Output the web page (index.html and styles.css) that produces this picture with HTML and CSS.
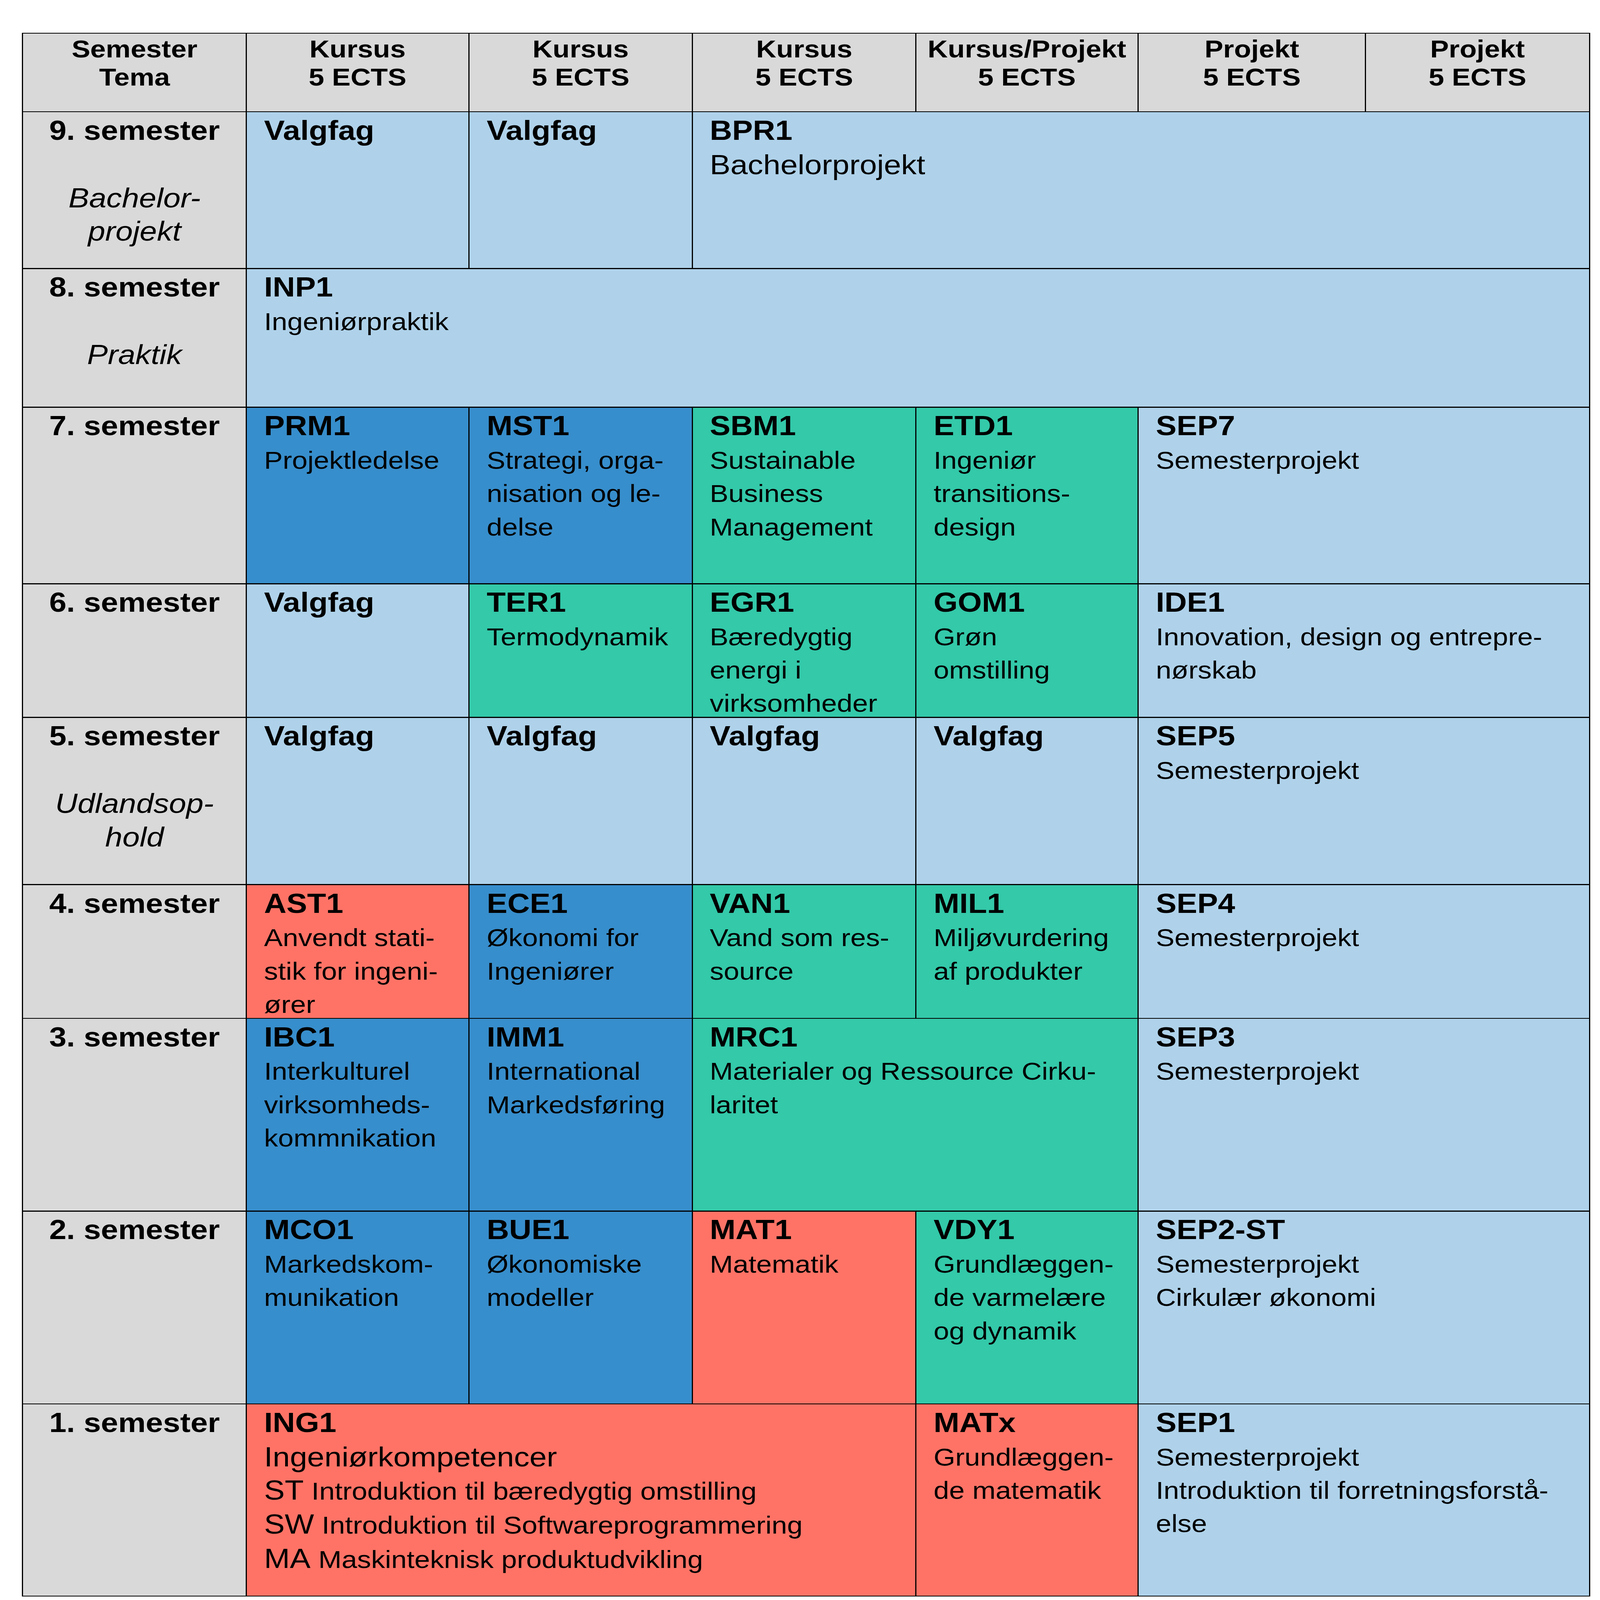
FILE: index.html
```html
<!DOCTYPE html>
<html lang="da">
<head>
<meta charset="utf-8">
<title>Studieplan</title>
<link rel="stylesheet" href="styles.css">
</head>
<body>
<div class="plan">
  <!-- header -->
  <div class="hd"><div class="hd-text">Semester<br>Tema</div></div>
  <div class="hd"><div class="hd-text">Kursus<br>5 ECTS</div></div>
  <div class="hd"><div class="hd-text">Kursus<br>5 ECTS</div></div>
  <div class="hd"><div class="hd-text">Kursus<br>5 ECTS</div></div>
  <div class="hd"><div class="hd-text">Kursus/Projekt<br>5 ECTS</div></div>
  <div class="hd"><div class="hd-text">Projekt<br>5 ECTS</div></div>
  <div class="hd"><div class="hd-text">Projekt<br>5 ECTS</div></div>

  <!-- 9. semester -->
  <div class="sem"><span class="sem-no">9. semester</span><span class="theme">Bachelor-<br>projekt</span></div>
  <div class="cell light"><div class="code">Valgfag</div></div>
  <div class="cell light"><div class="code">Valgfag</div></div>
  <div class="cell light span-4"><div class="code">BPR1</div><div class="name big">Bachelorprojekt</div></div>

  <!-- 8. semester -->
  <div class="sem"><span class="sem-no">8. semester</span><span class="theme">Praktik</span></div>
  <div class="cell light span-6"><div class="code">INP1</div><div class="name">Ingeniørpraktik</div></div>

  <!-- 7. semester -->
  <div class="sem"><span class="sem-no">7. semester</span></div>
  <div class="cell blue"><div class="code">PRM1</div><div class="name">Projektledelse</div></div>
  <div class="cell blue"><div class="code">MST1</div><div class="name">Strategi, orga-<br>nisation og le-<br>delse</div></div>
  <div class="cell green"><div class="code">SBM1</div><div class="name">Sustainable<br>Business<br>Management</div></div>
  <div class="cell green"><div class="code">ETD1</div><div class="name">Ingeniør<br>transitions-<br>design</div></div>
  <div class="cell light span-2"><div class="code">SEP7</div><div class="name">Semesterprojekt</div></div>

  <!-- 6. semester -->
  <div class="sem"><span class="sem-no">6. semester</span></div>
  <div class="cell light"><div class="code">Valgfag</div></div>
  <div class="cell green"><div class="code">TER1</div><div class="name">Termodynamik</div></div>
  <div class="cell green"><div class="code">EGR1</div><div class="name">Bæredygtig<br>energi i<br>virksomheder</div></div>
  <div class="cell green"><div class="code">GOM1</div><div class="name">Grøn<br>omstilling</div></div>
  <div class="cell light span-2"><div class="code">IDE1</div><div class="name">Innovation, design og entrepre-<br>nørskab</div></div>

  <!-- 5. semester -->
  <div class="sem"><span class="sem-no">5. semester</span><span class="theme">Udlandsop-<br>hold</span></div>
  <div class="cell light"><div class="code">Valgfag</div></div>
  <div class="cell light"><div class="code">Valgfag</div></div>
  <div class="cell light"><div class="code">Valgfag</div></div>
  <div class="cell light"><div class="code">Valgfag</div></div>
  <div class="cell light span-2"><div class="code">SEP5</div><div class="name">Semesterprojekt</div></div>

  <!-- 4. semester -->
  <div class="sem"><span class="sem-no">4. semester</span></div>
  <div class="cell red"><div class="code">AST1</div><div class="name">Anvendt stati-<br>stik for ingeni-<br>ører</div></div>
  <div class="cell blue"><div class="code">ECE1</div><div class="name">Økonomi for<br>Ingeniører</div></div>
  <div class="cell green"><div class="code">VAN1</div><div class="name">Vand som res-<br>source</div></div>
  <div class="cell green"><div class="code">MIL1</div><div class="name">Miljøvurdering<br>af produkter</div></div>
  <div class="cell light span-2"><div class="code">SEP4</div><div class="name">Semesterprojekt</div></div>

  <!-- 3. semester -->
  <div class="sem"><span class="sem-no">3. semester</span></div>
  <div class="cell blue"><div class="code">IBC1</div><div class="name">Interkulturel<br>virksomheds-<br>kommnikation</div></div>
  <div class="cell blue"><div class="code">IMM1</div><div class="name">International<br>Markedsføring</div></div>
  <div class="cell green span-2"><div class="code">MRC1</div><div class="name">Materialer og Ressource Cirku-<br>laritet</div></div>
  <div class="cell light span-2"><div class="code">SEP3</div><div class="name">Semesterprojekt</div></div>

  <!-- 2. semester -->
  <div class="sem"><span class="sem-no">2. semester</span></div>
  <div class="cell blue"><div class="code">MCO1</div><div class="name">Markedskom-<br>munikation</div></div>
  <div class="cell blue"><div class="code">BUE1</div><div class="name">Økonomiske<br>modeller</div></div>
  <div class="cell red"><div class="code">MAT1</div><div class="name">Matematik</div></div>
  <div class="cell green"><div class="code">VDY1</div><div class="name">Grundlæggen-<br>de varmelære<br>og dynamik</div></div>
  <div class="cell light span-2"><div class="code">SEP2-ST</div><div class="name">Semesterprojekt<br>Cirkulær økonomi</div></div>

  <!-- 1. semester -->
  <div class="sem"><span class="sem-no">1. semester</span></div>
  <div class="cell red span-3">
    <div class="code">ING1</div>
    <div class="name big">Ingeniørkompetencer</div>
    <div class="name"><span class="track">ST</span> Introduktion til bæredygtig omstilling</div>
    <div class="name"><span class="track">SW</span> Introduktion til Softwareprogrammering</div>
    <div class="name"><span class="track">MA</span> Maskinteknisk produktudvikling</div>
  </div>
  <div class="cell red"><div class="code">MATx</div><div class="name">Grundlæggen-<br>de matematik</div></div>
  <div class="cell light span-2"><div class="code">SEP1</div><div class="name">Semesterprojekt<br>Introduktion til forretningsforstå-<br>else</div></div>
</div>
</body>
</html>
```

FILE: styles.css
```css
/* The plan is drawn on a 4127 x 4705 unit canvas fitted to the viewport:
   --ux is one horizontal unit, --uy one vertical unit.
   Type is sized in vertical units and widened by --sx so that it keeps
   the proportions it has on the canvas. */
:root {
  --ux: calc(100vw / 4127);
  --uy: calc(100vh / 4705);
  --sx: tan(atan2(var(--ux), var(--uy)));
}

html {
  overflow: hidden;
}

html, body {
  margin: 0;
  padding: 0;
  background: #ffffff;
}

body {
  font-family: "Liberation Sans", Arial, sans-serif;
  color: #000000;
  padding: calc(96 * var(--uy)) 0 0 calc(56 * var(--ux));
}

.plan {
  display: grid;
  grid-template-columns:
    calc(575 * var(--ux)) calc(571 * var(--ux)) calc(573 * var(--ux))
    calc(574 * var(--ux)) calc(570 * var(--ux)) calc(584 * var(--ux))
    calc(575 * var(--ux));
  grid-template-rows:
    calc(228 * var(--uy)) calc(458 * var(--uy)) calc(405 * var(--uy))
    calc(516 * var(--uy)) calc(390 * var(--uy)) calc(489 * var(--uy))
    calc(390 * var(--uy)) calc(564 * var(--uy)) calc(564 * var(--uy))
    calc(562 * var(--uy));
  gap: calc(3 * var(--uy)) calc(3 * var(--ux));
  padding: calc(3 * var(--uy)) calc(3 * var(--ux));
  background: #000000;
  width: max-content;
}

/* header row */
.hd {
  background: #d9d9d9;
  padding-top: calc(3 * var(--uy));
  overflow: hidden;
}

.hd-text {
  font-weight: bold;
  font-size: calc(72 * var(--uy));
  line-height: calc(83.5 * var(--uy));
  text-align: center;
  white-space: nowrap;
  transform: scaleX(var(--sx));
  transform-origin: 50% 50%;
}

/* semester / theme column */
.sem {
  background: #d9d9d9;
  text-align: center;
  padding-top: calc(3 * var(--uy));
  font-size: calc(80 * var(--uy));
  white-space: nowrap;
  overflow: hidden;
}

.sem-no,
.theme {
  display: block;
  transform: scaleX(var(--sx));
  transform-origin: 50% 50%;
}

.sem-no {
  font-weight: bold;
  line-height: calc(103 * var(--uy));
}

.theme {
  font-style: italic;
  line-height: calc(98 * var(--uy));
  margin-top: calc(98 * var(--uy));
}

/* course cells */
.cell {
  padding: calc(3 * var(--uy)) calc(10 * var(--ux)) 0 calc(44 * var(--ux));
  overflow: hidden;
  white-space: nowrap;
}

.code,
.name {
  transform: scaleX(var(--sx));
  transform-origin: 0 50%;
}

.code {
  font-weight: bold;
  font-size: calc(80 * var(--uy));
  line-height: calc(103 * var(--uy));
}

.name {
  font-size: calc(72 * var(--uy));
  line-height: calc(98 * var(--uy));
}

.name.big {
  font-size: calc(80 * var(--uy));
}

.track {
  font-size: calc(80 * var(--uy));
}

.light { background: #afd2ea; }
.blue  { background: #378ecc; }
.green { background: #33c9a9; }
.red   { background: #ff7366; }

.span-2 { grid-column: span 2; }
.span-3 { grid-column: span 3; }
.span-4 { grid-column: span 4; }
.span-6 { grid-column: span 6; }
```
